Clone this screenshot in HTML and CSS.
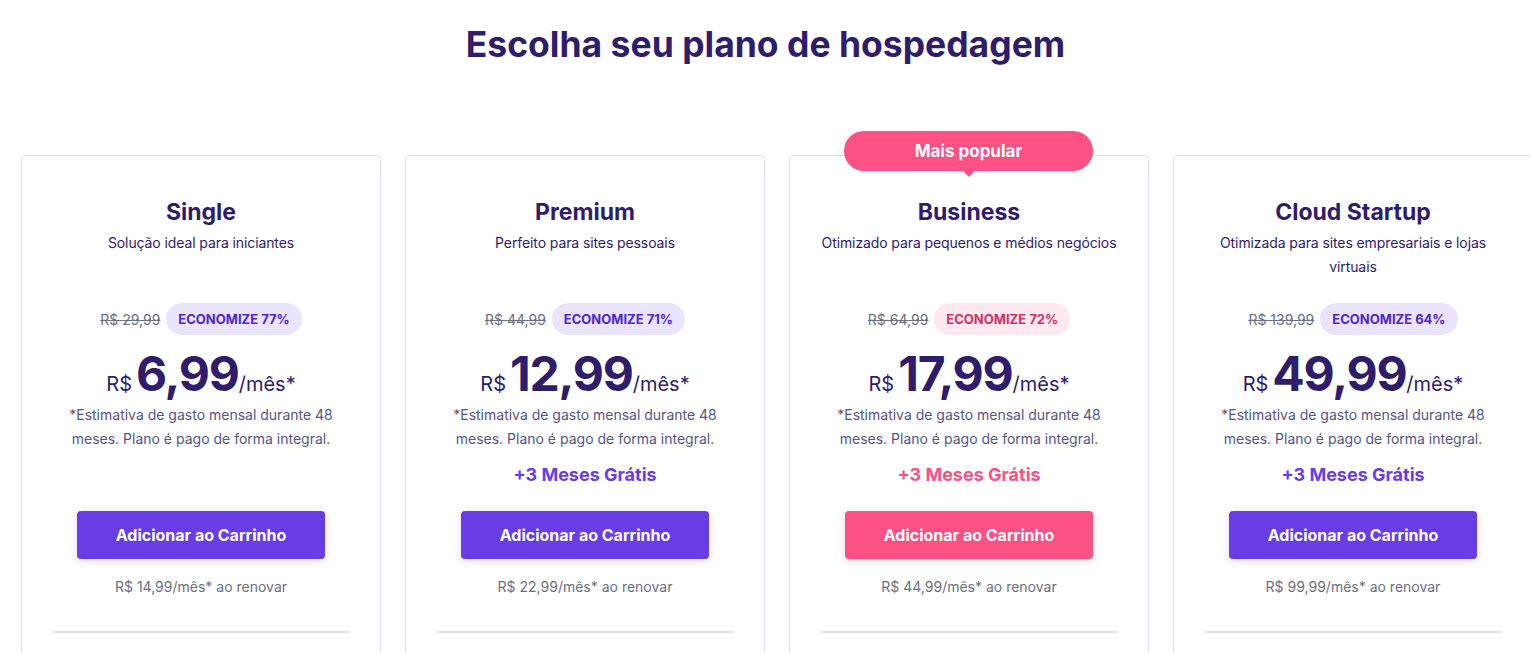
FILE: index.html
```html
<!DOCTYPE html>
<html lang="pt-BR">
<head>
<meta charset="utf-8">
<title>Escolha seu plano de hospedagem</title>
<link rel="stylesheet" href="styles.css">
</head>
<body>
<main class="page">
  <h1 class="page-title">Escolha seu plano de hospedagem</h1>
  <section class="plans">
    <article class="plan">
      <h2 class="plan-name">Single</h2>
      <p class="plan-desc">Solução ideal para iniciantes</p>
      <div class="price-old-row">
        <span class="price-old">R$ 29,99</span>
        <span class="save">ECONOMIZE 77%</span>
      </div>
      <div class="price"><span class="cur">R$</span><span class="amount">6,99</span><span class="per">/mês*</span></div>
      <p class="note">*Estimativa de gasto mensal durante 48 meses. Plano é pago de forma integral.</p>
      <p class="bonus bonus-empty">&nbsp;</p>
      <button class="cta">Adicionar ao Carrinho</button>
      <p class="renew">R$ 14,99/mês* ao renovar</p>
      <hr class="divider">
    </article>
    <article class="plan">
      <h2 class="plan-name">Premium</h2>
      <p class="plan-desc">Perfeito para sites pessoais</p>
      <div class="price-old-row">
        <span class="price-old">R$ 44,99</span>
        <span class="save">ECONOMIZE 71%</span>
      </div>
      <div class="price"><span class="cur">R$</span><span class="amount">12,99</span><span class="per">/mês*</span></div>
      <p class="note">*Estimativa de gasto mensal durante 48 meses. Plano é pago de forma integral.</p>
      <p class="bonus">+3 Meses Grátis</p>
      <button class="cta">Adicionar ao Carrinho</button>
      <p class="renew">R$ 22,99/mês* ao renovar</p>
      <hr class="divider">
    </article>
    <article class="plan plan-popular">
      <div class="popular-tag">Mais popular</div>
      <h2 class="plan-name">Business</h2>
      <p class="plan-desc">Otimizado para pequenos e médios negócios</p>
      <div class="price-old-row">
        <span class="price-old">R$ 64,99</span>
        <span class="save save-pink">ECONOMIZE 72%</span>
      </div>
      <div class="price"><span class="cur">R$</span><span class="amount">17,99</span><span class="per">/mês*</span></div>
      <p class="note">*Estimativa de gasto mensal durante 48 meses. Plano é pago de forma integral.</p>
      <p class="bonus bonus-pink">+3 Meses Grátis</p>
      <button class="cta cta-pink">Adicionar ao Carrinho</button>
      <p class="renew">R$ 44,99/mês* ao renovar</p>
      <hr class="divider">
    </article>
    <article class="plan">
      <h2 class="plan-name">Cloud Startup</h2>
      <p class="plan-desc">Otimizada para sites empresariais e lojas virtuais</p>
      <div class="price-old-row">
        <span class="price-old">R$ 139,99</span>
        <span class="save">ECONOMIZE 64%</span>
      </div>
      <div class="price"><span class="cur">R$</span><span class="amount">49,99</span><span class="per">/mês*</span></div>
      <p class="note">*Estimativa de gasto mensal durante 48 meses. Plano é pago de forma integral.</p>
      <p class="bonus">+3 Meses Grátis</p>
      <button class="cta">Adicionar ao Carrinho</button>
      <p class="renew">R$ 99,99/mês* ao renovar</p>
      <hr class="divider">
    </article>
  </section>
</main>
</body>
</html>
```

FILE: styles.css
```css
html, body {
  margin: 0;
  padding: 0;
  overflow: hidden;
  background: #ffffff;
}
body {
  font-family: "Inter", "Noto Sans", sans-serif;
  color: #2f1c6a;
}
.page {
  display: flex;
  flex-direction: column;
}
.page-title {
  margin: 22px 0 0;
  text-align: center;
  font-size: 35.5px;
  line-height: 46px;
  font-weight: 700;
  color: #2f1c6a;
}
.plans {
  display: flex;
  gap: 24px;
  padding-left: 21px;
  margin-top: 87px;
}
.plan {
  position: relative;
  flex: 0 0 360px;
  box-sizing: border-box;
  border: 1px solid #d9def8;
  border-radius: 4px;
  padding: 40px 31px 120px;
  display: flex;
  flex-direction: column;
  align-items: center;
  text-align: center;
}
.plan-name {
  margin: 0;
  font-size: 23px;
  line-height: 32px;
  font-weight: 700;
  color: #2f1c6a;
}
.plan-desc {
  margin: 3px 0 0;
  min-height: 48px;
  font-size: 14px;
  line-height: 24px;
  color: #2f1c6a;
  letter-spacing: -0.1px;
}
.price-old-row {
  margin-top: 24px;
  display: flex;
  align-items: center;
  gap: 6px;
}
.price-old {
  font-size: 14px;
  color: #6d7081;
  text-decoration: line-through;
}
.save {
  display: inline-flex;
  align-items: center;
  height: 32px;
  padding: 0 12px;
  border-radius: 16px;
  background: #ebe4ff;
  color: #5025d1;
  font-size: 13px;
  font-weight: 700;
}
.save-pink {
  background: #ffe8ef;
  color: #d63163;
}
.price {
  margin-top: 11px;
  display: flex;
  align-items: baseline;
  color: #2f1c6a;
  height: 56px;
}
.cur {
  font-size: 20px;
  margin-right: 4px;
}
.amount {
  font-size: 48px;
  line-height: 56px;
  font-weight: 700;
  letter-spacing: -1.2px;
}
.per {
  font-size: 20px;
}
.note {
  margin: 1px 0 0;
  font-size: 14px;
  line-height: 24px;
  color: #57557f;
}
.bonus {
  margin: 12px 0 0;
  font-size: 18px;
  line-height: 24px;
  font-weight: 700;
  color: #673de6;
}
.bonus-empty {
  visibility: hidden;
}
.bonus-pink {
  color: #fc5185;
}
.cta {
  margin-top: 24px;
  width: 248px;
  height: 48px;
  border: none;
  border-radius: 4px;
  background: #673de6;
  color: #ffffff;
  font-family: inherit;
  font-size: 16px;
  font-weight: 700;
  box-shadow: 0 2px 8px rgba(29, 30, 32, 0.16);
}
.cta-pink {
  background: #fc5185;
}
.renew {
  margin: 16px 0 0;
  font-size: 14px;
  line-height: 24px;
  color: #6d7081;
}
.divider {
  align-self: stretch;
  margin: 32px 0 0;
  border: none;
  height: 2px;
  background: #dae0fb;
}
.popular-tag {
  position: absolute;
  top: -25px;
  left: 54px;
  width: 249px;
  height: 40px;
  border-radius: 20px;
  background: #fc5185;
  color: #ffffff;
  font-size: 17px;
  font-weight: 700;
  line-height: 40px;
  text-align: center;
}
.popular-tag::after {
  content: "";
  position: absolute;
  left: 50%;
  bottom: -6px;
  margin-left: -6px;
  border-left: 6px solid transparent;
  border-right: 6px solid transparent;
  border-top: 6px solid #fc5185;
}
```
